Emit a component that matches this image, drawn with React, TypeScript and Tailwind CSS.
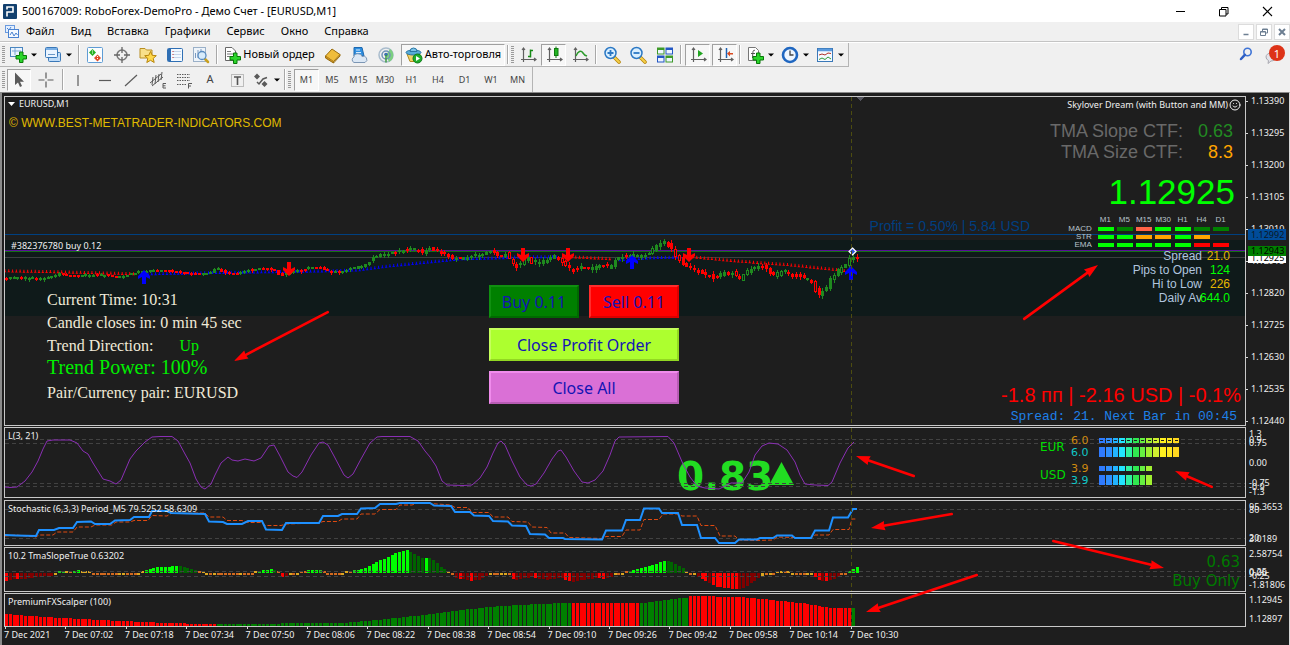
import React from "react";
import { Smile } from "lucide-react";

type Pt = [number, number];

const UI = "font-['Noto_Sans',sans-serif]";
const ARIAL = "font-['Liberation_Sans',sans-serif]";

/* ---------- series data ---------- */

const PITCH = 3.78;
const FIRST = 6;
const BARS = 226;

const price: Pt[] = [[5,279],[10,278],[20,277],[30,278],[45,278],[55,275],[60,273],[65,274],[70,275],[90,275],[105,275],[115,276],[125,276],[132,274],[140,272],[152,270],[172,270],[187,273],[200,274],[210,273],[217,268],[222,270],[230,274],[240,273],[250,270],[262,268],[275,269],[282,276],[287,273],[293,271],[305,269],[312,267],[322,268],[330,271],[345,271],[352,268],[362,266],[370,262],[376,256],[385,254],[400,251],[408,248],[420,250],[424,252],[430,248],[440,251],[448,254],[456,258],[466,258],[475,255],[485,254],[489,250],[500,254],[507,254],[513,262],[519,265],[524,260],[528,257],[535,262],[545,260],[550,259],[554,255],[560,257],[566,264],[575,270],[583,266],[590,267],[598,266],[605,265],[612,266],[618,258],[630,255],[640,256],[648,254],[655,247],[660,243],[665,241],[670,245],[675,252],[682,259],[688,266],[695,269],[704,274],[710,273],[717,277],[725,273],[735,272],[741,279],[747,272],[755,268],[762,265],[768,268],[773,275],[780,273],[785,270],[792,273],[800,276],[808,278],[814,281],[818,293],[823,291],[828,287],[834,275],[840,270],[846,265],[850,259],[856,257]];

const trendDots: { color: string; pts: Pt[] }[] = [
  { color: "#ff0000", pts: [[5,271],[60,272],[100,273],[137,274]] },
  { color: "#0000ff", pts: [[148,274],[200,273],[330,271],[360,270],[390,266],[430,262],[460,259],[500,258],[520,257],[560,257]] },
  { color: "#ff0000", pts: [[572,257],[613,259]] },
  { color: "#0000ff", pts: [[620,260],[650,258],[684,257]] },
  { color: "#ff0000", pts: [[693,257],[735,261],[790,265],[848,271]] },
];

const lineL: Pt[] = [[5,487],[10,487.5],[17,487],[25,481],[32,472],[38,461],[43,449],[47,441],[53,440],[70,440],[77,443],[83,451],[88,454],[93,463],[103,479],[110,481],[116,484],[121,480],[130,459],[136,451],[145,442],[152,437],[160,436.5],[172,436.5],[178,441],[185,454],[190,463],[196,479],[201,487],[205,489],[211,484],[215,475],[221,463],[228,457],[232,460],[238,461],[245,459],[254,461],[261,458],[269,446],[274,445],[280,456],[288,472],[293,476],[297,477.5],[302,472],[311,455],[319,443],[323,442],[328,445],[334,456],[344,475],[348,478],[353,474],[361,459],[370,443],[377,437],[382,436.5],[410,436.5],[418,441],[425,451],[430,457],[436,466],[442,481],[447,485],[463,485.5],[472,485],[480,478],[487,467],[493,453],[498,443],[501,441],[505,445],[512,461],[520,477],[527,485],[531,486],[536,484],[544,473],[552,459],[558,451],[561,450],[566,457],[574,471],[582,482],[588,483],[595,480],[603,471],[610,455],[615,441],[619,437],[668,436.5],[674,443],[683,464],[690,477],[697,486],[705,488],[719,489],[731,483],[742,483],[749,472],[755,455],[762,446],[769,443],[778,444],[787,450],[795,462],[800,475],[805,484],[815,485],[828,485.5],[832,482],[840,463],[848,448],[854,442]];

const stochMain: Pt[] = [[5,535],[16,535.5],[36,536],[39,530],[54,530],[59,528],[73,528],[77,522],[91,521.5],[95,524],[110,524],[115,520.5],[130,520],[134,517],[149,517],[152,511],[167,511],[171,513],[188,513.5],[205,514],[209,521.5],[223,522],[227,524],[242,524],[248,521],[262,521],[266,529.5],[282,530],[286,523],[319,523],[323,516],[338,516],[342,514],[357,514],[361,508.5],[375,508],[380,504],[396,504],[400,503],[430,503],[434,505.5],[451,506],[455,512],[470,512],[474,515.5],[489,516],[493,521],[508,521.5],[512,525.5],[526,526],[530,534],[545,534.5],[549,538],[563,538],[565,539],[602,539.5],[606,530.5],[622,530.5],[626,520],[640,520],[644,508.5],[659,508.5],[662,513],[678,513],[682,525],[697,525],[701,538],[715,538],[719,543],[735,543],[739,539.5],[757,539.5],[760,538],[773,538],[777,535.5],[792,535.5],[795,538],[811,538],[815,530.5],[829,530.5],[833,517.5],[848,517.5],[853,509],[857,509]];

const stochSignal: Pt[] = [[5,536],[16,535],[36,537],[39,535],[53,535],[57,532],[73,532],[77,527],[91,527],[95,525],[112,525],[116,522],[130,522],[134,520.5],[148,520.5],[152,515.5],[167,516],[171,513.5],[205,513],[209,517],[223,517],[227,520.5],[242,520.5],[248,522.5],[262,522.5],[265,525.5],[281,525.5],[286,524],[319,523],[323,521.5],[338,521.5],[342,519],[357,519],[361,514],[375,514],[380,509.5],[396,509.5],[400,505],[412,505],[416,503.5],[430,503.5],[451,505],[455,507.5],[468,507.5],[472,512.5],[489,512.5],[493,517],[508,517],[512,521.5],[528,522],[532,527],[547,527.5],[551,533],[565,533],[569,537.5],[602,538.5],[606,536.5],[622,536.5],[626,530],[640,530],[644,519.5],[659,519.5],[663,514],[678,514],[682,516],[697,516],[701,525.5],[715,525.5],[720,536],[735,536],[739,540],[757,540.5],[773,540],[777,537],[811,538],[815,535],[829,535],[833,529.5],[849,529.5],[852,519],[857,519]];

const slope: Pt[] = [[5,-8],[12,-6],[20,-6],[30,-5],[42,-3.5],[50,-3],[53,-2],[56,1],[60,3],[65,1],[76,3],[83,1],[100,-1],[120,-1],[135,-1],[140,1],[150,5],[160,6],[178,7],[188,5],[195,3],[199,1],[205,-1],[220,-1],[228,-2],[245,-2.5],[255,1],[262,3],[272,4],[277,1],[281,-4],[287,-3],[292,-1],[302,1],[308,3],[318,3],[325,-1],[340,-1],[350,2],[365,5],[380,13],[395,20],[405,23],[412,20],[420,15],[428,15],[432,13],[440,6],[447,1],[451,-1],[455,-5],[470,-8],[480,-6],[488,-2],[508,-2],[513,-7],[530,-4],[545,-7],[560,-5],[571,-9],[580,-7],[595,-5],[602,-6],[615,-2],[625,1],[633,3],[640,5],[652,8],[663,12],[670,11],[680,6],[686,1],[690,-1],[700,-6],[715,-14],[735,-16],[742,-15],[755,-7],[763,-1],[785,1],[793,-1],[810,-2],[820,-8],[828,-8],[838,-3],[843,-1],[847,2],[855,6]];

const scalper: Pt[] = [[5,614],[30,616],[60,618],[100,620],[140,622],[200,624],[215,624],[340,623],[375,620],[405,617],[430,614],[470,609],[500,606],[560,603],[640,603],[680,598],[687,598],[689,596],[740,597],[760,599],[800,603],[830,608],[855,608]];

function at(pts: Pt[], x: number): number {
  if (x <= pts[0][0]) return pts[0][1];
  for (let i = 1; i < pts.length; i++) {
    if (x <= pts[i][0]) {
      const [x0, y0] = pts[i - 1];
      const [x1, y1] = pts[i];
      return y0 + ((y1 - y0) * (x - x0)) / (x1 - x0);
    }
  }
  return pts[pts.length - 1][1];
}

const join = (pts: Pt[]) => pts.map((p) => p.join(",")).join(" ");
const noise = (i: number) => {
  const s = Math.sin(i * 12.9898) * 43758.5453;
  return s - Math.floor(s);
};
const bars = Array.from({ length: BARS }, (_, i) => i);

/* ---------- chart layers ---------- */

function Layer({ top, children }: { top: number; children: React.ReactNode }) {
  return (
    <svg className="absolute inset-0 size-full" aria-hidden="true">
      <g transform={`translate(-5 ${-top})`} shapeRendering="crispEdges">
        {children}
        <line x1="851.5" x2="851.5" y1={top} y2={top + 340} stroke="#4c4c10" strokeDasharray="4 3" />
      </g>
    </svg>
  );
}

function Level({ y }: { y: number }) {
  return <line x1="5" x2="3000" y1={y} y2={y} stroke="#424242" strokeDasharray="4 3" />;
}

function Candles() {
  return (
    <>
      {trendDots.map((s, k) => {
        const from = s.pts[0][0];
        const count = Math.floor((s.pts[s.pts.length - 1][0] - from) / PITCH) + 1;
        return (
          <g key={k} shapeRendering="auto">
            {Array.from({ length: count }, (_, i) => {
              const x = from + i * PITCH;
              const y = at(s.pts, x);
              return <path key={i} d={`M${x - 1.5} ${y + 1.3}h3l-1 -1.3v-1.700h-1v1.700z`} fill={s.color} />;
            })}
          </g>
        );
      })}
      {bars.map((i) => {
        const x = FIRST + i * PITCH;
        if (x > 857) return null;
        const wild = x > 500 ? 1.6 : x > 370 ? 1.2 : 0.7;
        const open = at(price, x - 2) + (noise(i) - 0.5) * 2 * wild;
        const close = at(price, x + 2) + (noise(i + 77) - 0.5) * 2 * wild;
        const up = close < open;
        const color = up ? "#1f8a1f" : "#ff0000";
        const y = Math.round(Math.min(open, close));
        const h = Math.max(2, Math.round(Math.abs(open - close) + wild));
        const px = Math.round(x);
        const wick = noise(i + 31) * 4 * wild;
        return (
          <g key={i}>
            <rect x={px} y={y - Math.round(wick / 2)} width="1" height={h + Math.round(wick)} fill={color} />
            <rect x={px - 1} y={y} width="3" height={h} fill={color} />
            {h > 4 && noise(i + 9) > 0.5 && <rect x={px} y={y + 1} width="1" height={h - 2} fill="#0f1a1a" />}
          </g>
        );
      })}
    </>
  );
}

function Marker({ x, y, up }: { x: number; y: number; up?: boolean }) {
  return (
    <path
      transform={`translate(${x} ${y}) scale(1 ${up ? 1 : -1})`}
      d="M0 -7L6 -1V2L2 0V7H-2V0L-6 2V-1Z"
      fill={up ? "#0000ff" : "#ff0000"}
      shapeRendering="auto"
    />
  );
}

function SlopeBars() {
  return (
    <>
      {bars.map((i) => {
        const x = FIRST + i * PITCH - 1;
        if (x > 857) return null;
        const v = at(slope, x);
        const next = at(slope, x + PITCH);
        const prev = at(slope, x - PITCH);
        const small = Math.abs(v) < 2.6;
        const rising = Math.abs(v) >= Math.abs(prev) || Math.abs(next) > Math.abs(v) + 2;
        let fill = v > 0 ? (rising ? "#00ff00" : "#006400") : rising ? "#ff0000" : "#800000";
        if (!small && v < 0 && noise(i) > 0.75) fill = "#800000";
        if (small) fill = noise(i) > 0.5 ? "#daa520" : "#d2691e";
        if (small && v > 1.8) fill = "#22c522";
        const h = Math.max(2, Math.round(Math.abs(v)));
        return <rect key={i} x={Math.round(x)} y={v > 0 ? 573 - h : 573} width="3" height={h} fill={fill} />;
      })}
    </>
  );
}

function ScalperBars() {
  return (
    <>
      {bars.map((i) => {
        const x = FIRST + i * PITCH - 1;
        if (x > 853) return null;
        const y = Math.round(at(scalper, x));
        const red = x < 214 || (x > 569 && x < 638) || (x > 687 && x < 849);
        return <rect key={i} x={Math.round(x)} y={y} width="3" height={626 - y} fill={red ? "#ff0000" : "#008000"} />;
      })}
    </>
  );
}

const pointers: [number, number, number, number][] = [
  [329, 312, 235, 361],
  [1025, 319, 1099, 265],
  [915, 476, 857, 456],
  [1213, 487, 1176, 471],
  [953, 514, 872, 528],
  [1054, 541, 1165, 568],
  [978, 575, 867, 612],
];

function Pointers() {
  return (
    <svg className="pointer-events-none absolute inset-0 size-full" aria-hidden="true">
      <g transform="translate(-3 -93)">
        {pointers.map(([x1, y1, x2, y2], i) => {
          const a = Math.atan2(y2 - y1, x2 - x1);
          const len = Math.hypot(x2 - x1, y2 - y1);
          return (
            <g key={i} transform={`translate(${x1} ${y1}) rotate(${(a * 180) / Math.PI})`} fill="#ff0000">
              <rect x="-1" y="-1.3" width={len - 9} height="2.6" rx="1.2" />
              <path d={`M${len} 0L${len - 14} -4.6L${len - 13} 0L${len - 14} 4.6Z`} />
            </g>
          );
        })}
      </g>
    </svg>
  );
}

/* ---------- toolbar pieces ---------- */

function Ico({ children, size = 18 }: { children: React.ReactNode; size?: number }) {
  return (
    <svg width={size} height={size} viewBox="0 0 18 18" fill="none" className="shrink-0" aria-hidden="true">
      {children}
    </svg>
  );
}
const Plus = ({ x = 12, y = 12 }: { x?: number; y?: number }) => (
  <path
    transform={`translate(${x} ${y})`}
    d="M-1.5 -5h3.5v3.5H5.500v3.500H2V5.500h-3.500V2H-5v-3.500h3.500z"
    fill="#2bd52b"
    stroke="#087808"
  />
);
const Caret = () => (
  <svg width="6" height="4" viewBox="0 0 6 4" className="shrink-0" aria-hidden="true">
    <path d="M0 0.500H6L3 3.500Z" fill="#000" />
  </svg>
);
const Grip = ({ className = "" }: { className?: string }) => (
  <span className={`flex w-[3px] shrink-0 flex-col gap-px ${className}`} aria-hidden="true">
    {Array.from({ length: 9 }, (_, i) => (
      <span key={i} className="h-px w-full bg-[#9a9a9a]" />
    ))}
  </span>
);
const Sep = () => (
  <span className="flex w-[5px] shrink-0 justify-center self-stretch py-0.5" aria-hidden="true">
    <span className="w-px bg-[#a8a8a8]" />
    <span className="w-px bg-white" />
  </span>
);
function Tool({ label, className, pressed, children }: { label: string; className: string; pressed?: boolean; children: React.ReactNode }) {
  return (
    <button
      type="button"
      aria-label={label}
      aria-pressed={pressed}
      className={`flex h-[22px] shrink-0 items-center justify-center whitespace-nowrap ${className} ${pressed ? "border border-t-[#a0a0a0] border-r-white border-b-white border-l-[#a0a0a0] bg-[#f7f7f7]" : ""}`}
    >
      {children}
    </button>
  );
}

const Axes = () => <path d="M4.500 2V16M2 13.500H17M3 4L4.500 2L6 4M15 12L17 13.500L15 15" stroke="#606060" strokeWidth="1.200" />;

function Magnifier({ minus }: { minus?: boolean }) {
  return (
    <Ico>
      <path d="M11 11L16 16" stroke="#b8860b" strokeWidth="3.600" strokeLinecap="round" />
      <path d="M11.500 11.500L16 16" stroke="#f5cf4a" strokeWidth="2" strokeLinecap="round" />
      <circle cx="7.500" cy="7" r="5.500" fill="#d9efff" stroke="#2b78c4" strokeWidth="1.500" />
      <path d={minus ? "M4.500 7H10.500" : "M4.500 7H10.500M7.500 4V10"} stroke="#2b78c4" strokeWidth="1.800" />
    </Ico>
  );
}

function TopToolbar() {
  return (
    <div className="flex h-6 items-center border-b border-[#b4b4b4] pl-0.5" role="toolbar" aria-label="Стандартная">
      <Grip />
      <Tool label="Новый график" className="w-[35px] gap-1">
        <Ico>
          <rect x="1.500" y="1.500" width="12" height="9" fill="#eaf4ff" stroke="#4a86c0" />
          <path d="M3 5H12M6 2V9" stroke="#7aa7d4" />
          <Plus x={12} y={11} />
        </Ico>
        <Caret />
      </Tool>
      <Tool label="Профили" className="w-[36px] gap-1">
        <Ico>
          <rect x="4.500" y="6.500" width="12" height="9" rx="1" fill="#bfdcf8" stroke="#3a78b8" />
          <rect x="1.500" y="1.500" width="12" height="10" rx="1" fill="#eaf4ff" stroke="#3a78b8" />
          <path d="M2 3H13" stroke="#7ab0e6" strokeWidth="2" />
          <path d="M4 8.500H11" stroke="#6a98c8" />
        </Ico>
        <Caret />
      </Tool>
      <Sep />
      <Tool label="Обзор рынка" className="w-[27px]">
        <Ico>
          <rect x="1.500" y="1.500" width="15" height="15" rx="1" fill="#fbfdff" stroke="#5f9cd4" />
          <path d="M6.500 3L10 6.500L6.500 10L3 6.500Z" fill="#25b025" />
          <path d="M11.500 8.500L15 12L11.500 15.500L8 12Z" fill="#e04b2a" />
          <path d="M6.500 4.500V8.500M11.500 10V14" stroke="#fff" strokeDasharray="1 1" />
        </Ico>
      </Tool>
      <Tool label="Окно данных" className="w-[27px]">
        <Ico>
          <circle cx="9" cy="9" r="5" stroke="#777" strokeWidth="1.500" />
          <path d="M9 1V7M9 11V17M1 9H7M11 9H17" stroke="#666" strokeWidth="1.300" />
        </Ico>
      </Tool>
      <Tool label="Навигатор" className="w-[26px]">
        <Ico>
          <path d="M1 2.500H6L7.500 4H13V12H1Z" fill="#f8e08a" stroke="#b98f22" />
          <path d="M11.500 5.500L13.200 9.300L17.300 9.700L14.200 12.400L15.200 16.500L11.500 14.300L7.800 16.500L8.800 12.400L5.700 9.700L9.800 9.300Z" fill="#ffd94d" stroke="#b8860b" />
        </Ico>
      </Tool>
      <Tool label="Терминал" className="w-[27px]">
        <Ico>
          <rect x="1.500" y="2.500" width="15" height="13" rx="1" fill="#f3f9ff" stroke="#2f6fb4" />
          <rect x="2" y="3" width="3" height="12" fill="#2f6fb4" />
          <path d="M7 5.500H15M7 8.500H15M7 11.500H15" stroke="#c4d6ea" />
          <path d="M6.500 5.500H7.500M6.500 8.500H7.500M6.500 11.500H7.500" stroke="#c03030" />
        </Ico>
      </Tool>
      <Tool label="Тестер стратегий" className="w-[26px]">
        <Ico>
          <rect x="1.500" y="1.500" width="12" height="14" fill="#eef4fa" stroke="#9ab0c8" />
          <path d="M3.500 12V7M6 12V4M9 6V3" stroke="#7a9ac0" />
          <path d="M13 13L16 16" stroke="#c8a020" strokeWidth="2.500" strokeLinecap="round" />
          <circle cx="10" cy="9.500" r="4" fill="#d8ecfb" stroke="#5a8cc0" strokeWidth="1.300" />
        </Ico>
      </Tool>
      <Sep />
      <Tool label="Новый ордер" className="w-[100px] gap-0.5 text-[11px]">
        <Ico>
          <path d="M2.500 1.500H9L12.500 5V14.500H2.500Z" fill="#fff" stroke="#666" />
          <path d="M4 5.500H8M4 8H10M4 10.500H8" stroke="#777" />
          <Plus x={12} y={12} />
        </Ico>
        Новый ордер
      </Tool>
      <Tool label="MetaEditor" className="w-[27px]">
        <Ico>
          <path d="M1.500 10L8 3L16 8.500L9.500 15.500Z" fill="#f0bd3c" stroke="#9a6e10" />
          <path d="M1.500 10V12L9.500 17V15.500M9.500 17L16 10V8.500" fill="#c98d1a" stroke="#9a6e10" />
        </Ico>
      </Tool>
      <Tool label="Рынок" className="w-[26px]">
        <Ico>
          <path d="M4 1.500H12L14 10H4Z" fill="#2f8fe0" stroke="#1c68b0" />
          <path d="M6 4H10M6 6.500H11" stroke="#d7ecff" />
          <path d="M4 16.500a3 3 0 0 1 0 -5.500a4 3 0 0 1 8 -0.500a3 3 0 0 1 3 6Z" fill="#dbe7f4" stroke="#7c96b4" />
        </Ico>
      </Tool>
      <Tool label="Сигналы" className="w-[27px]">
        <Ico>
          <circle cx="9" cy="9" r="7" stroke="#a9bccd" strokeWidth="1.500" />
          <path d="M9 9L12 16A7.500 7.500 0 0 0 13 3Z" fill="#7ccf80" />
          <circle cx="9" cy="9" r="4" stroke="#6f93b8" strokeWidth="1.500" />
          <circle cx="9" cy="8.500" r="1.800" fill="#3b6fb0" />
          <path d="M9 9V16.500" stroke="#3d9a40" strokeWidth="1.500" />
        </Ico>
      </Tool>
      <Tool label="Авто-торговля" className="ml-0.5 w-[104px] gap-0.5 text-[11px]" pressed>
        <Ico>
          <path d="M2 8H15L12 15.500H5Z" fill="#f3d268" stroke="#b08a1c" />
          <ellipse cx="8.500" cy="6.500" rx="7.500" ry="2.500" fill="#58acd8" stroke="#2b76a4" />
          <path d="M5 5.500a3.500 3.500 0 0 1 7 0Z" fill="#7cc4e8" stroke="#2b76a4" />
          <circle cx="12.500" cy="12.500" r="4.500" fill="#1fae2c" stroke="#0f7a19" />
          <path d="M11 10V15L15 12.500Z" fill="#fff" />
        </Ico>
        Авто-торговля
      </Tool>
      <Sep />
      <Grip className="ml-px" />
      <Tool label="Бары" className="w-[27px]">
        <Ico><Axes /><path d="M11.500 3.500V11.500M11.500 4.500H14M9 10.500H11.500" stroke="#178a17" strokeWidth="1.500" /></Ico>
      </Tool>
      <Tool label="Японские свечи" className="w-[25px]" pressed>
        <Ico><Axes /><path d="M11 0.500V12" stroke="#0f7a0f" /><rect x="9.500" y="2.500" width="3.500" height="7" fill="#22b422" stroke="#0f7a0f" /></Ico>
      </Tool>
      <Tool label="Линия" className="w-[27px]">
        <Ico><Axes /><path d="M5 10C7 5 10 4 12 7S15 9.500 16 10" stroke="#2a9a2a" strokeWidth="1.500" /></Ico>
      </Tool>
      <Sep />
      <Tool label="Увеличить" className="w-[27px]"><Magnifier /></Tool>
      <Tool label="Уменьшить" className="w-[26px]"><Magnifier minus /></Tool>
      <Tool label="Мозаика" className="w-[27px]">
        <Ico>
          <path d="M1 1.500H8.500V8.500H1ZM9.500 9.500H17V16.500H9.500Z" fill="#3d9a28" />
          <path d="M9.500 1.500H17V8.500H9.500ZM1 9.500H8.500V16.500H1Z" fill="#2357c4" />
          <path d="M2 4H7.500V7.500H2ZM10.500 4H16V7.500H10.500ZM2 12H7.500V15.500H2ZM10.500 12H16V15.500H10.500Z" fill="#eef5ff" />
        </Ico>
      </Tool>
      <Sep />
      <Tool label="Автопрокрутка" className="ml-0.5 w-[25px]" pressed>
        <Ico><Axes /><path d="M9 4V11L14 7.500Z" fill="#22a522" /></Ico>
      </Tool>
      <Tool label="Сдвиг графика" className="ml-0.5 w-[25px]" pressed>
        <Ico><Axes /><path d="M10.500 2V12" stroke="#1c62b4" strokeWidth="1.500" /><path d="M11 7.500L14 5V7H17V8.500H14V10.500Z" fill="#d84a20" /></Ico>
      </Tool>
      <Sep />
      <Tool label="Индикаторы" className="w-[35px] gap-1">
        <Ico>
          <path d="M2.500 1.500H9.500L12.500 4.500V14.500H2.500Z" fill="#fff" stroke="#777" />
          <path d="M9 4.500C6.500 3.500 7 6 6.500 12M5 7.500H9" stroke="#555" />
          <Plus x={12} y={12} />
        </Ico>
        <Caret />
      </Tool>
      <Tool label="Периоды" className="w-[35px] gap-1">
        <Ico>
          <circle cx="9" cy="9" r="7" fill="#eef6ff" stroke="#1f66c0" strokeWidth="2.600" />
          <path d="M9 4.500V9H12.500" stroke="#444" strokeWidth="1.300" />
        </Ico>
        <Caret />
      </Tool>
      <Tool label="Шаблоны" className="w-[36px] gap-1">
        <Ico>
          <rect x="1.500" y="2.500" width="15" height="13" fill="#f5faff" stroke="#3a78b8" />
          <path d="M2 4H16" stroke="#5a9ade" strokeWidth="2.500" />
          <path d="M3 9L6 8L9 9L12 7L15 7.500" stroke="#b0332a" />
          <path d="M3 13.500L6 12L9 13.500L12 11L15 13" stroke="#2f9a3a" />
        </Ico>
        <Caret />
      </Tool>
      <span className="h-full w-px bg-[#b4b4b4]" />
    </div>
  );
}

const frames: [string, string][] = [
  ["M1", "w-[25px]"], ["M5", "w-[26px]"], ["M15", "w-[27px]"], ["M30", "w-[26px]"], ["H1", "w-[27px]"],
  ["H4", "w-[26px]"], ["D1", "w-[27px]"], ["W1", "w-[26px]"], ["MN", "w-[27px]"],
];

function BottomToolbar() {
  const s = "#5a5a5a";
  return (
    <div className="flex h-[25px] items-center self-start border-r border-[#b4b4b4] pl-0.5" role="toolbar" aria-label="Графические инструменты">
      <Grip />
      <Tool label="Курсор" className="ml-0.5 w-6" pressed>
        <Ico><path d="M5 1.500V14L8 11.500L10 16L12 15L10 10.700H14Z" fill={s} /></Ico>
      </Tool>
      <Tool label="Перекрестие" className="w-[29px]">
        <Ico><path d="M9 1.500V7.500M9 10.500V16.500M1.500 9H7.500M10.500 9H16.500" stroke={s} strokeWidth="1.200" /></Ico>
      </Tool>
      <Sep />
      <Tool label="Вертикальная линия" className="w-[26px]"><Ico><path d="M9 4V15" stroke={s} strokeWidth="1.200" /></Ico></Tool>
      <Tool label="Горизонтальная линия" className="w-[27px]"><Ico><path d="M3 9.500H15" stroke={s} strokeWidth="1.200" /></Ico></Tool>
      <Tool label="Трендовая линия" className="w-[26px]"><Ico><path d="M3 15L15 4" stroke={s} strokeWidth="1.200" /></Ico></Tool>
      <Tool label="Равноудаленный канал" className="w-[27px]">
        <Ico>
          <path d="M1 12L12 3M3 15L14 6M4 6L3 14M7 4L6 13M10 3L9 11M13 1L12 9" stroke={s} />
          <path d="M17 12.500H14V17H17M14 14.800H16.500" stroke={s} />
        </Ico>
      </Tool>
      <Tool label="Линии Фибоначчи" className="w-[26px]">
        <Ico>
          <path d="M2 3.500H15M2 6.500H15M2 9.500H15M2 13.500H11" stroke={s} strokeDasharray="1.500 1" />
          <path d="M17 12.500H13.500V17.500M13.500 15H16" stroke={s} />
        </Ico>
      </Tool>
      <Tool label="Текст" className="w-[26px] text-[11px] text-[#444]">A</Tool>
      <Tool label="Текстовая метка" className="w-[27px]">
        <Ico>
          <rect x="3.500" y="3.500" width="12" height="12" stroke="#888" strokeDasharray="1 1" />
          <path d="M6 6H13M9.500 6V14" stroke="#555" strokeWidth="1.600" />
        </Ico>
      </Tool>
      <Tool label="Стрелки" className="w-[32px] gap-1">
        <Ico>
          <path d="M5 2.500L8 5.500L5 8.500L2 5.500ZM12.500 10L15.500 13L12.500 16L9.500 13Z" fill={s} />
          <path d="M5 11L7 13L11 8L15 6.500" stroke={s} strokeWidth="1.500" />
        </Ico>
        <Caret />
      </Tool>
      <Sep />
      <Grip className="ml-px mr-[3px]" />
      {frames.map(([f, w]) => (
        <Tool key={f} label={f} pressed={f === "M1"} className={`text-[9px] text-[#444] ${w}`}>{f}</Tool>
      ))}
      <span className="w-px" />
    </div>
  );
}

/* ---------- pane frame ---------- */

function Pane({ className, axis, children }: { className: string; axis: React.ReactNode; children: React.ReactNode }) {
  return (
    <section className={`flex ${className}`}>
      <div className="relative min-w-0 flex-1 overflow-hidden border border-[#c8c8c8]">{children}</div>
      <div className="relative w-[43px] shrink-0">{axis}</div>
    </section>
  );
}

const AxisLabels = ({ items }: { items: [string, string][] }) => (
  <>
    {items.map(([t, pos]) => (
      <span key={t} className={`absolute left-[3px] whitespace-nowrap leading-[10px] ${pos}`}>{t}</span>
    ))}
  </>
);

const prices = ["1.13390", "1.13295", "1.13200", "1.13105", "1.13010", "1.12915", "1.12820", "1.12725", "1.12630", "1.12535", "1.12440"];
const times = ["2021", "07:02", "07:18", "07:34", "07:50", "08:06", "08:22", "08:38", "08:54", "09:10", "09:26", "09:42", "09:58", "10:14", "10:30"];

const L = "bg-[#00ff00]", G = "bg-[#008000]", O = "bg-[#ffa500]", R = "bg-[#ff0000]", T = "bg-[#ff6347]";
const signalRows: [string, string[]][] = [
  ["MACD", [L, G, T, L, L, G, G]],
  ["STR", [L, L, O, O, L, O, ""]],
  ["EMA", [L, L, L, L, L, R, R]],
];

const meter = ["bg-[#2f7bff]", "bg-[#2f8fff]", "bg-[#22b4ff]", "bg-[#22e4ff]", "bg-[#30f0a0]", "bg-[#30e850]", "bg-[#66f040]", "bg-[#a0f030]", "bg-[#d0f030]", "bg-[#fff020]", "bg-[#ffe820]", "bg-[#ffd820]"];
const Meter = ({ count, className, slim }: { count: number; className: string; slim?: boolean }) => (
  <span className={`grid w-20 grid-cols-12 gap-x-px ${className}`}>
    {meter.slice(0, count).map((c) => (
      <span key={c} className={`flex items-center justify-center ${c}`}>
        {slim && <span className="h-px w-[3px] bg-[#1e1e1e]" />}
      </span>
    ))}
  </span>
);

function Currency({ name, a, b, count, slim }: { name: string; a: string; b: string; count: number; slim?: boolean }) {
  return (
    <div className="flex h-7 items-center font-['DejaVu_Sans',sans-serif]">
      <span className="w-[31px] text-[12px] text-[#00dc00]">{name}</span>
      <span className="flex w-[28px] flex-col text-[11px] leading-[12px]">
        <span className="text-[#d08a10]">{a}</span>
        <span className="text-[#10c8c8]">{b}</span>
      </span>
      <span className="flex flex-col gap-1">
        <Meter count={count} className="h-[5px]" slim={slim} />
        <Meter count={count} className="h-2.5" />
      </span>
    </div>
  );
}

const stats: [string, string, string][] = [
  ["Spread", "21.0", "text-[#e6b800]"],
  ["Pips to Open", "124", "text-[#00ff00]"],
  ["Hi to Low", "226", "text-[#e6b800]"],
  ["Daily Av", "644.0", "text-[#00ff00]"],
];

const BEVEL = "h-[33px] border-2 text-[16px] text-[#1414b4] leading-none";

export default function App() {
  return (
    <div className={`flex min-h-screen flex-col overflow-hidden bg-[#f0f0f0] text-black ${UI}`}>
      <header className="flex h-[22px] items-center bg-white pl-[3px] text-[11px]">
        <svg width="14" height="15" viewBox="0 0 14 15" aria-hidden="true">
          <rect width="14" height="15" rx="1" fill="#12406e" />
          <path d="M4 12.500V8H10V3H4V5.500" fill="none" stroke="#fff" strokeWidth="1.600" />
        </svg>
        <h1 className="ml-[5px] whitespace-nowrap">500167009: RoboForex-DemoPro - Демо Счет - [EURUSD,M1]</h1>
        <div className="ml-auto flex">
          <button type="button" aria-label="Свернуть" className="flex h-5 w-[43px] items-center justify-center">
            <svg width="11" height="11" viewBox="0 0 11 11"><path d="M1 5.500H10" stroke="#000" /></svg>
          </button>
          <button type="button" aria-label="Восстановить" className="flex h-5 w-[43px] items-center justify-center">
            <svg width="11" height="11" viewBox="0 0 11 11" fill="none" stroke="#000"><path d="M1.500 3.500H8V10H1.500ZM3.500 3.500V1.500H10V8H8" /></svg>
          </button>
          <button type="button" aria-label="Закрыть" className="flex h-5 w-[45px] items-center justify-center">
            <svg width="11" height="11" viewBox="0 0 11 11"><path d="M1 1L10 10M10 1L1 10" stroke="#000" strokeWidth="1.100" /></svg>
          </button>
        </div>
      </header>

      <nav className="flex h-5 items-center border-b border-[#c4c4c4] pl-[5px] text-[11px]">
        <svg width="14" height="14" viewBox="0 0 14 14" fill="none" aria-hidden="true">
          <rect x="0.500" y="0.500" width="9" height="7" fill="#e4f0ff" stroke="#6a9ade" />
          <rect x="3.500" y="4.500" width="10" height="8" fill="#f4f9ff" stroke="#4a82d0" />
          <path d="M5 10L7 7L9 11L11 8L12.500 10M2 3L4 5L6 2" stroke="#4a82d0" />
        </svg>
        <div className="ml-[7px] flex gap-4">
          {["Файл", "Вид", "Вставка", "Графики", "Сервис", "Окно", "Справка"].map((m) => (
            <a key={m} href="#">{m}</a>
          ))}
        </div>
        <div className="ml-auto flex gap-0.5">
          <button type="button" aria-label="Свернуть график" className="flex size-4 items-center justify-center border border-[#dcdcdc] bg-white">
            <svg width="8" height="8" viewBox="0 0 8 8"><path d="M1.500 6.500H6.500" stroke="#6d7f92" strokeWidth="1.500" /></svg>
          </button>
          <button type="button" aria-label="Восстановить график" className="flex size-4 items-center justify-center border border-[#dcdcdc] bg-white">
            <svg width="8" height="8" viewBox="0 0 8 8" fill="none" stroke="#6d7f92"><path d="M0.500 3.500H5.500V7.500H0.500ZM0.500 4H5.500M2.500 3V1H7.500V5H6M2.500 1.500H7.500" /></svg>
          </button>
          <button type="button" aria-label="Закрыть график" className="flex size-4 items-center justify-center border border-[#dcdcdc] bg-white">
            <svg width="8" height="8" viewBox="0 0 8 8"><path d="M1 1L7 7M7 1L1 7" stroke="#6d7f92" strokeWidth="2" /></svg>
          </button>
        </div>
      </nav>

      <div className="flex justify-between border-t border-white">
        <div className="flex flex-col items-start">
          <TopToolbar />
          <BottomToolbar />
        </div>
        <div className="flex items-start gap-2.5 pt-px pr-[5px]">
          <button type="button" aria-label="Поиск" className="mt-[3px]">
            <svg width="14" height="14" viewBox="0 0 14 14" fill="none"><circle cx="8.500" cy="5" r="3.700" stroke="#3f74d6" strokeWidth="1.600" /><path d="M5.800 7.800L2 12" stroke="#2f5fc4" strokeWidth="2.500" strokeLinecap="round" /></svg>
          </button>
          <button type="button" aria-label="Сообщения: 1" className="relative h-5 w-[22px]">
            <svg width="14" height="12" viewBox="0 0 14 12" className="absolute bottom-0 left-0.5"><path d="M1 5a5 4 0 1 1 5 4L3 11.500L3.500 8.500A4 4 0 0 1 1 5Z" fill="#e4e4ea" stroke="#a8a8b0" /></svg>
            <span className="absolute top-px right-0 flex size-4 items-center justify-center rounded-full bg-[#dd3318] text-[11px] leading-none text-white">1</span>
          </button>
        </div>
      </div>

      <main className="relative flex flex-1 flex-col border-t border-r border-l-2 border-t-[#8a8a8a] border-r-[#d8d8d8] border-l-[#8a8a8a] bg-[#1e1e1e] pt-[3px] pl-0.5 text-[9px] leading-[10px] text-[#f0f0f0]">
        <Pane
          className="min-h-[330px] flex-1"
          axis={
            <>
              <div className="flex h-[330px] flex-col justify-between">
                {prices.map((p) => (
                  <span key={p} className="flex items-center gap-[3px]"><span className="h-px w-0.5 bg-[#d8d8d8]" />{p}</span>
                ))}
              </div>
              <span className="absolute top-[156px] left-0.5 h-[11px] w-[38px] bg-white pl-[3px] leading-[11px] text-black">1.12925</span>
              <span className="absolute top-[150px] left-0.5 h-[10px] w-[38px] bg-[#008000] pl-[3px] text-black">1.12943</span>
              <span className="absolute top-[133px] left-0.5 h-[11px] w-[38px] bg-[#004c99] pl-[3px] leading-[11px] text-[#0c1826]">1.12992</span>
            </>
          }
        >
          <Layer top={97}>
            <rect x="5" y="240" width="3000" height="76" fill="#0f1a1a" />
            <rect x="5" y="234" width="3000" height="1" fill="#004080" />
            <rect x="5" y="257" width="3000" height="1" fill="#3a3f3f" />
            <rect x="5" y="250" width="3000" height="1" fill="#5a0f9a" />
            <rect x="5" y="251" width="3000" height="1" fill="#147014" />
            <Candles />
            <Marker x={144} y={277} up />
            <Marker x={289} y={269} />
            <Marker x={523} y={255} />
            <Marker x={568} y={255} />
            <Marker x={632} y={262} up />
            <Marker x={689} y={255} />
            <Marker x={851} y={273} up />
            <path d="M856 97H864L860 101Z" fill="#55555f" />
            <path d="M852.500 248L856 251.500L852.500 255L849 251.500Z" fill="#2a50d8" stroke="#fff" strokeWidth="1.200" shapeRendering="auto" />
          </Layer>

          <div className="absolute top-0.5 left-[3px]">
            <p className="flex items-center gap-1">
              <svg width="7" height="4" viewBox="0 0 7 4" aria-hidden="true"><path d="M0 0H7L3.500 4Z" fill="#fff" /></svg>
              EURUSD,M1
            </p>
            <p className={`mt-1.5 ml-px text-[12px] leading-4 text-[#e0bb00] ${ARIAL}`}>© WWW.BEST-METATRADER-INDICATORS.COM</p>
          </div>
          <p className="absolute top-[144px] left-1.5">#382376780 buy 0.12</p>

          <div className="absolute top-[191px] left-[42px] font-['Liberation_Serif',serif] text-[16px] leading-[23px] text-[#f0ead8]">
            <p>Current Time: 10:31</p>
            <p>Candle closes in: 0 min 45 sec</p>
            <p>Trend Direction: <span className="ml-[22px] text-[#00ee00]">Up</span></p>
            <p className="text-[20px] leading-[20px] text-[#00ee00]">Trend Power: 100%</p>
            <p className="mt-1">Pair/Currency pair: EURUSD</p>
          </div>

          <div className="absolute top-[188px] left-[484px] grid w-[190px] grid-cols-2 gap-x-[10px] gap-y-[10px]">
            <button type="button" className={`border-t-[#109010] border-l-[#109010] border-r-[#006a00] border-b-[#006a00] bg-[#008000] ${BEVEL}`}>Buy 0.11</button>
            <button type="button" className={`border-t-[#ff2c2c] border-l-[#ff2c2c] border-r-[#dc0000] border-b-[#dc0000] bg-[#ff0000] ${BEVEL}`}>Sell 0.11</button>
            <button type="button" className={`col-span-2 border-t-[#c6ff5c] border-l-[#c6ff5c] border-r-[#92d822] border-b-[#92d822] bg-[#adff2f] ${BEVEL}`}>Close Profit Order</button>
            <button type="button" className={`col-span-2 border-t-[#f08cec] border-l-[#f08cec] border-r-[#b85cb4] border-b-[#b85cb4] bg-[#da70d6] ${BEVEL}`}>Close All</button>
          </div>

          <p className={`absolute top-[121px] right-[215px] text-[14px] leading-4 text-[#003f80] ${ARIAL}`}>Profit = 0.50% | 5.84 USD</p>

          <div className={`absolute top-0.5 right-1 flex flex-col items-end ${ARIAL}`}>
            <p className={`flex items-center gap-px leading-[12px] ${UI}`}>Skylover Dream (with Button and MM)<Smile size={12} strokeWidth={2} /></p>
            <div className="mt-2.5 mr-2 grid grid-cols-[auto_50px] text-right text-[18px] leading-[21px] text-[#696969]">
              <span>TMA Slope CTF:</span><span className="text-[#228b22]">0.63</span>
              <span>TMA Size CTF:</span><span className="text-[#ffa500]">8.3</span>
            </div>
            <p className="mt-[7px] mr-1.5 text-[35px] leading-[44px] text-[#00ff00]">1.12925</p>
            <table className="mt-px mr-[9px] border-collapse text-[8px] leading-[8px] text-[#b8c4cc]">
              <thead>
                <tr>
                  <th aria-label="Индикатор" />
                  {["M1", "M5", "M15", "M30", "H1", "H4", "D1"].map((h) => (
                    <th key={h} className="h-[10px] w-[19px] min-w-[19px] p-0 pr-1 text-center font-normal">{h}</th>
                  ))}
                </tr>
              </thead>
              <tbody>
                {signalRows.map(([n, cells]) => (
                  <tr key={n}>
                    <th className="h-2 p-0 pr-1.5 text-right font-normal">{n}</th>
                    {cells.map((c, i) => (
                      <td key={i} className="h-2 p-0 align-middle"><span className={`block h-1 w-4 ${c}`} /></td>
                    ))}
                  </tr>
                ))}
              </tbody>
            </table>
            <dl className="mr-[11px] text-[12px] leading-[14px] text-[#b0c4de]">
              {stats.map(([k, v, c]) => (
                <div key={k} className="flex justify-end">
                  <dt>{k}</dt>
                  <dd className={`flex w-7 justify-end ${c}`}>{v}</dd>
                </div>
              ))}
            </dl>
          </div>

          <div className="absolute top-[286px] right-1 text-right">
            <p className={`text-[20px] leading-6 text-[#ff0000] ${ARIAL}`}>-1.8 пп | -2.16 USD | -0.1%</p>
            <p className="mt-0.5 mr-1 font-['Liberation_Mono',monospace] text-[13px] leading-4 text-[#1e80e8]">Spread: 21. Next Bar in 00:45</p>
          </div>
        </Pane>

        <Pane
          className="mt-px h-[71px]"
          axis={<AxisLabels items={[["1.3", "top-[2px]"], ["0.9", "top-2"], ["0.75", "top-[11px]"], ["0.00", "top-[31px]"], ["-0.75", "top-[51px]"], ["-0.9", "top-[55px]"], ["-1.3", "top-[60px]"]]} />}
        >
          <Layer top={428}>
            <path d="M781.500 462L794 485H769Z" fill="#22dd22" shapeRendering="auto" />
          </Layer>
          <p className="absolute top-[27px] left-[672px] font-['DejaVu_Sans',sans-serif] text-[39px] leading-[44px] font-bold text-[#22dd22]">0.83</p>
          <svg className="absolute inset-0 size-full" aria-hidden="true">
            <g transform="translate(-5 -428)">
              <g shapeRendering="crispEdges">
                <Level y={439.5} /><Level y={443.5} /><Level y={483.5} /><Level y={486.5} />
              </g>
              <polyline points={join(lineL)} fill="none" stroke="#8a2fb4" strokeWidth="1" />
            </g>
          </svg>
          <p className="absolute top-[3px] left-[3px]">L(3, 21)</p>
          <div className="absolute top-[5px] right-[66px] flex flex-col">
            <Currency name="EUR" a="6.0" b="6.0" count={12} slim />
            <Currency name="USD" a="3.9" b="3.9" count={8} />
          </div>
        </Pane>

        <Pane
          className="mt-0.5 h-[46px]"
          axis={<AxisLabels items={[["95.3653", "top-0.5"], ["80", "top-[5px]"], ["20", "top-[33px]"], ["3.0189", "top-[34px]"]]} />}
        >
          <Layer top={501}>
            <Level y={509.5} /><Level y={538.5} />
            <g shapeRendering="auto" fill="none">
              <polyline points={join(stochSignal)} stroke="#e04a10" strokeDasharray="4 2" />
              <polyline points={join(stochMain)} stroke="#1e90ff" strokeWidth="2" />
            </g>
          </Layer>
          <p className="absolute top-[3px] left-[3px]">Stochastic (6,3,3) Period_M5 79.5252 58.6309</p>
        </Pane>

        <Pane
          className="mt-px h-[45px]"
          axis={<AxisLabels items={[["2.58754", "top-0.5"], ["0.25", "top-5"], ["0.00", "top-[21px]"], ["-0.25", "top-6"], ["-1.81806", "top-[33px]"]]} />}
        >
          <Layer top={548}>
            <SlopeBars />
            <Level y={571.5} /><Level y={576.5} />
          </Layer>
          <p className="absolute top-[3px] left-[3px]">10.2 TmaSlopeTrue 0.63202</p>
          <div className="absolute top-[5px] right-[5px] text-right font-['DejaVu_Sans',sans-serif] text-[15px] leading-[19px] text-[#007800]">
            <p>0.63</p>
            <p>Buy Only</p>
          </div>
        </Pane>

        <Pane className="mt-px h-[34px]" axis={<AxisLabels items={[["1.12945", "top-0.5"], ["1.12897", "top-[21px]"]]} />}>
          <Layer top={594}><ScalperBars /></Layer>
          <p className="absolute top-[3px] left-[3px]">PremiumFXScalper (100)</p>
        </Pane>

        <div className="grid h-[18px] w-[906px] grid-cols-15">
          {times.map((t) => (
            <span key={t} className="flex flex-col gap-px whitespace-nowrap">
              <span className="ml-px h-0.5 w-px bg-[#d8d8d8]" />
              7 Dec {t}
            </span>
          ))}
        </div>
        <Pointers />
      </main>
    </div>
  );
}
